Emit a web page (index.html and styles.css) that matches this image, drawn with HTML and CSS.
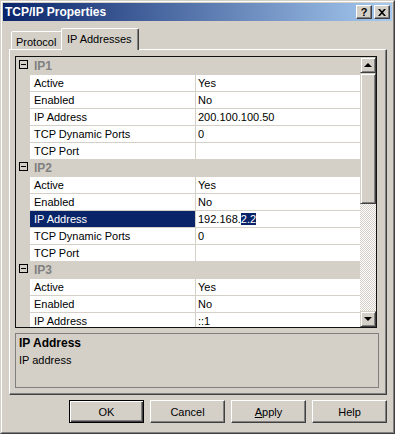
FILE: index.html
```html
<!DOCTYPE html>
<html>
<head>
<meta charset="utf-8">
<link rel="stylesheet" href="styles.css">
</head>
<body>
<div class="window">
  <div class="window-inner">
    <div class="titlebar">
      <span class="title">TCP/IP Properties</span>
      <div class="caption-buttons">
        <div class="cap-btn help">?</div>
        <div class="cap-btn close">
          <svg width="8" height="7" viewBox="0 0 8 7"><path d="M0 0h2l2 2.3L6 0h2L5 3.5 8 7H6L4 4.7 2 7H0l3-3.5z" fill="#000"/></svg>
        </div>
      </div>
    </div>

    <div class="tabs">
      <div class="tab">Protocol</div>
      <div class="tab active">IP Addresses</div>
    </div>

    <div class="panel">
      <div class="grid">
        <div class="list">
          <div class="row cat"><span class="margin"><span class="minus"></span></span><span class="cat-name">IP1</span></div>
          <div class="row"><span class="margin"></span><span class="name">Active</span><span class="value">Yes</span></div>
          <div class="row"><span class="margin"></span><span class="name">Enabled</span><span class="value">No</span></div>
          <div class="row"><span class="margin"></span><span class="name">IP Address</span><span class="value">200.100.100.50</span></div>
          <div class="row"><span class="margin"></span><span class="name">TCP Dynamic Ports</span><span class="value">0</span></div>
          <div class="row"><span class="margin"></span><span class="name">TCP Port</span><span class="value"></span></div>

          <div class="row cat"><span class="margin"><span class="minus"></span></span><span class="cat-name">IP2</span></div>
          <div class="row"><span class="margin"></span><span class="name">Active</span><span class="value">Yes</span></div>
          <div class="row"><span class="margin"></span><span class="name">Enabled</span><span class="value">No</span></div>
          <div class="row selected"><span class="margin"></span><span class="name">IP Address</span><span class="value">192.168.<span class="sel-text">2.2</span></span></div>
          <div class="row"><span class="margin"></span><span class="name">TCP Dynamic Ports</span><span class="value">0</span></div>
          <div class="row"><span class="margin"></span><span class="name">TCP Port</span><span class="value"></span></div>

          <div class="row cat"><span class="margin"><span class="minus"></span></span><span class="cat-name">IP3</span></div>
          <div class="row"><span class="margin"></span><span class="name">Active</span><span class="value">Yes</span></div>
          <div class="row"><span class="margin"></span><span class="name">Enabled</span><span class="value">No</span></div>
          <div class="row"><span class="margin"></span><span class="name">IP Address</span><span class="value">::1</span></div>
        </div>
        <div class="scrollbar">
          <div class="sb-btn"><span class="arrow-up"></span></div>
          <div class="sb-thumb"></div>
          <div class="sb-track"></div>
          <div class="sb-btn"><span class="arrow-down"></span></div>
        </div>
      </div>

      <div class="desc">
        <div class="desc-title">IP Address</div>
        <div class="desc-text">IP address</div>
      </div>
    </div>

    <div class="buttons">
      <div class="btn default">OK</div>
      <div class="btn">Cancel</div>
      <div class="btn"><u>A</u>pply</div>
      <div class="btn">Help</div>
    </div>
  </div>
</div>
</body>
</html>
```

FILE: styles.css
```css
* { box-sizing: border-box; }

html, body {
  margin: 0;
  padding: 0;
  background: #d4d0c8;
}

body {
  font-family: "Liberation Sans", Arial, sans-serif;
  font-size: 11px;
  color: #000;
}

.window {
  width: 395px;
  height: 434px;
  border: 1px solid;
  border-color: #d4d0c8 #404040 #404040 #d4d0c8;
  background: #d4d0c8;
}

.window-inner {
  height: 100%;
  border: 1px solid;
  border-color: #fff #808080 #808080 #fff;
  padding: 1px;
}

.titlebar {
  height: 18px;
  display: flex;
  align-items: center;
  justify-content: space-between;
  padding: 0 2px 0 2px;
  background: linear-gradient(to right, #0a246a, #a6caf0);
}

.title {
  color: #fff;
  font-weight: bold;
  font-size: 12px;
  line-height: 18px;
}

.caption-buttons {
  display: flex;
  gap: 2px;
}

.cap-btn {
  width: 16px;
  height: 14px;
  background: #d4d0c8;
  border: 1px solid;
  border-color: #fff #404040 #404040 #fff;
  box-shadow: inset -1px -1px #808080;
  display: flex;
  align-items: center;
  justify-content: center;
  font-weight: bold;
  font-size: 11px;
  line-height: 12px;
}

.tabs {
  display: flex;
  align-items: flex-end;
  height: 21px;
  margin-top: 7px;
  padding-left: 8px;
  position: relative;
  z-index: 2;
}

.tab {
  height: 18px;
  width: 52px;
  border: 1px solid;
  border-bottom: none;
  border-color: #fff #404040 transparent #fff;
  box-shadow: inset -1px 0 #808080;
  border-radius: 2px 2px 0 0;
  padding-left: 4px;
  line-height: 20px;
  background: #d4d0c8;
}

.tab.active {
  height: 22px;
  width: 78px;
  margin-left: -2px;
  margin-bottom: -1px;
  padding-left: 5px;
  line-height: 20px;
}

.panel {
  width: 378px;
  height: 346px;
  margin-left: 6px;
  border: 1px solid;
  border-color: #fff #404040 #404040 #fff;
  box-shadow: inset -1px -1px #808080;
  padding: 6px 0 0 5px;
}

.grid {
  width: 362px;
  height: 272px;
  border: 1px solid #111;
  display: flex;
}

.list {
  width: 344px;
  height: 270px;
  overflow: hidden;
  background: #fff;
}

.row {
  display: grid;
  grid-template-columns: 14px 166px 1fr;
  height: 17px;
  border-top: 1px solid #d4d0c8;
  line-height: 16px;
  white-space: nowrap;
}

.margin {
  background: #d4d0c8;
  position: relative;
}

.name {
  padding-left: 4px;
  border-right: 1px solid #d4d0c8;
}

.value {
  padding-left: 2px;
}

.row.cat {
  display: flex;
  background: #d4d0c8;
}

.row.cat .margin {
  width: 14px;
}

.cat-name {
  padding-left: 4px;
  font-weight: bold;
  color: #808080;
  font-size: 12px;
}

.minus {
  position: absolute;
  left: 3px;
  top: 2px;
  width: 9px;
  height: 9px;
  border: 1px solid #000;
  background: #d4d0c8;
}

.minus::after {
  content: "";
  position: absolute;
  left: 1px;
  top: 3px;
  width: 5px;
  height: 1px;
  background: #000;
}

.row.selected .name {
  background: #0a246a;
  color: #fff;
}

.sel-text {
  background: #0a246a;
  color: #fff;
}

.scrollbar {
  width: 16px;
  height: 270px;
  display: flex;
  flex-direction: column;
}

.sb-btn, .sb-thumb {
  background: #d4d0c8;
  border: 1px solid;
  border-color: #d4d0c8 #404040 #404040 #d4d0c8;
  box-shadow: inset 1px 1px #fff, inset -1px -1px #808080;
}

.sb-btn {
  height: 16px;
  display: flex;
  align-items: center;
  justify-content: center;
}

.sb-thumb {
  height: 131px;
}

.sb-track {
  flex: 1;
  background: repeating-conic-gradient(#fff 0 25%, #d4d0c8 0 50%) 0 0 / 2px 2px;
}

.arrow-up, .arrow-down {
  width: 0;
  height: 0;
  border-left: 4px solid transparent;
  border-right: 4px solid transparent;
}

.arrow-up {
  border-bottom: 4px solid #000;
  margin-top: -1px;
}

.arrow-down {
  border-top: 4px solid #000;
}

.desc {
  width: 364px;
  height: 55px;
  margin-top: 5px;
  border: 1px solid #808080;
  padding: 2px 3px;
}

.desc-title {
  font-weight: bold;
  line-height: 14px;
  font-size: 12px;
}

.desc-text {
  line-height: 16px;
  margin-top: 2px;
}

.buttons {
  display: flex;
  justify-content: flex-end;
  gap: 6px;
  width: 384px;
  margin-top: 5px;
}

.btn {
  width: 75px;
  height: 23px;
  border: 1px solid;
  border-color: #fff #404040 #404040 #fff;
  box-shadow: inset -1px -1px #808080;
  display: flex;
  align-items: center;
  justify-content: center;
  background: #d4d0c8;
}

.btn.default {
  border: 1px solid #000;
  box-shadow: inset 1px 1px #fff, inset -1px -1px #404040, inset -2px -2px #808080;
}
```
